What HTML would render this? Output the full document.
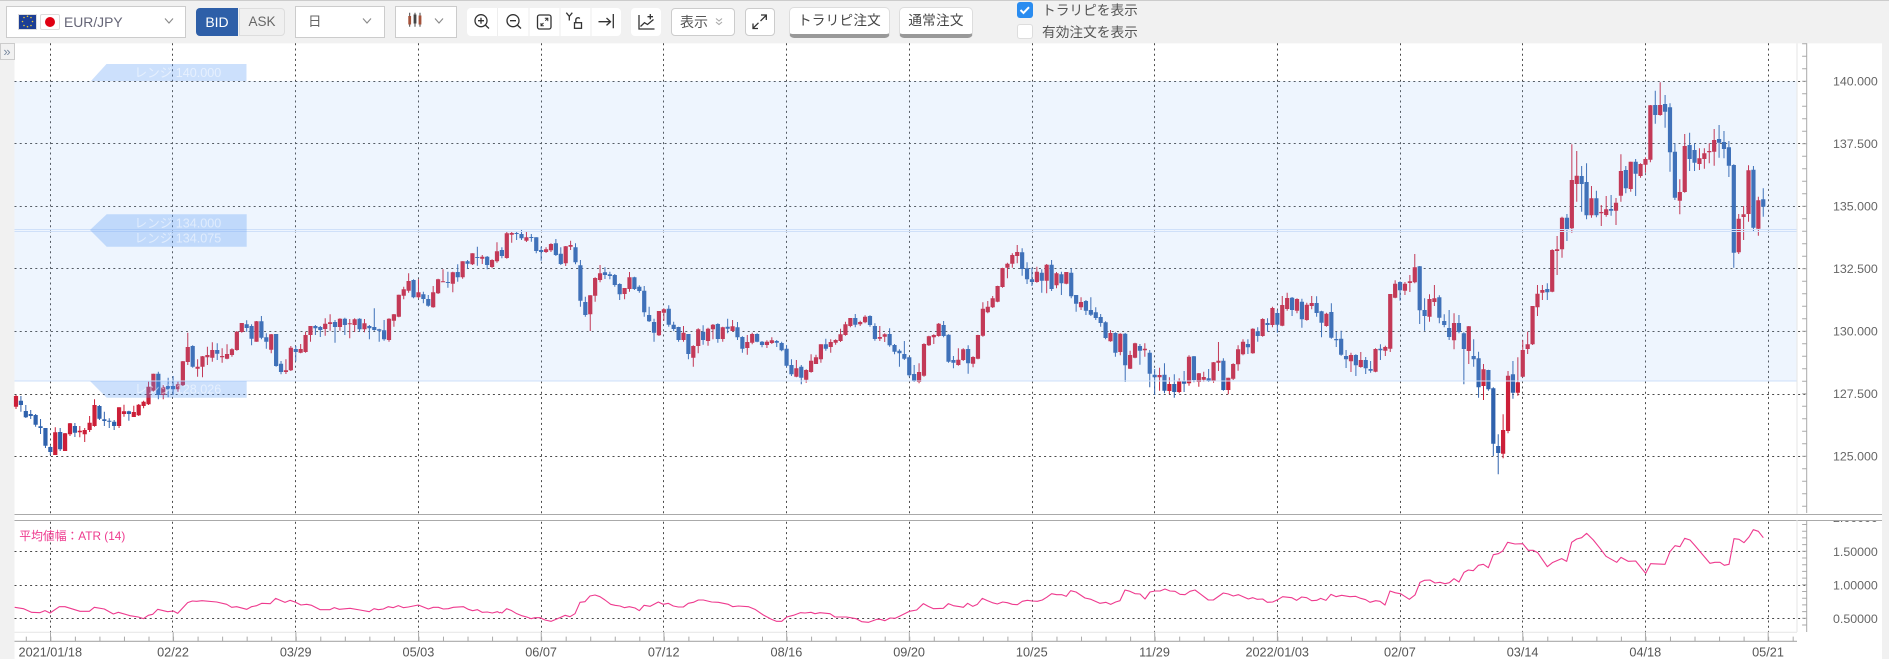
<!DOCTYPE html>
<html lang="ja"><head><meta charset="utf-8"><title>EUR/JPY</title>
<style>
html,body{margin:0;padding:0;width:1889px;height:659px;overflow:hidden;background:#f1f1f1}
body{position:relative;font-family:"Liberation Sans","Noto Sans CJK JP",sans-serif;color:#555}
.a{position:absolute;box-sizing:border-box}
.dd{background:#fff;border:1px solid #ccc;top:6px;height:32px}
.btn{background:#fff;border:1px solid #ccc;border-radius:4px;top:8px;height:28px}
.ord{top:7.300px;height:30.500px;background:#fff;border:1px solid #ddd;border-bottom:4px solid #999;border-radius:5px;font-size:13.600px;letter-spacing:.25px;color:#444;text-align:center;line-height:25px}
.cb{left:1017px;width:16px;border-radius:3px}
.lb{left:1042px;font-size:13.700px;line-height:18px;color:#555;white-space:nowrap}
svg{position:absolute;left:0;top:0}
text{font-family:"Liberation Sans","Noto Sans CJK JP",sans-serif}
</style></head><body>
<div class="a" style="left:0;top:0;width:1889px;height:1px;background:#ccc"></div>

<div class="a dd" style="left:6px;width:180px"></div>
<div class="a dd" style="left:295px;width:90px"></div>
<div class="a dd" style="left:395px;width:62px"></div>
<div class="a" style="left:18px;top:13.700px;width:19px;height:16px;background:#1d3f96;border:1px solid #ddd"></div>
<div class="a" style="left:40px;top:13.700px;width:20px;height:16px;background:#fff;border:1px solid #ddd;border-radius:2px"></div>
<div class="a" style="left:45px;top:16.500px;width:10px;height:10px;border-radius:50%;background:#e00012"></div>
<div class="a" style="left:64px;top:12px;font-size:13.900px;line-height:20px;color:#667">EUR/JPY</div>
<div class="a" style="left:196px;top:8px;width:42px;height:28px;background:#2e5fa8;border-radius:4px 0 0 4px;color:#fff;font-size:14px;line-height:28px;text-align:center">BID</div>
<div class="a" style="left:239px;top:8px;width:46px;height:28px;background:#f0f0f0;border:1px solid #ddd;border-radius:0 4px 4px 0;color:#666;font-size:13.500px;line-height:26px;text-align:center">ASK</div>
<div class="a" style="left:308px;top:12px;font-size:13.500px;line-height:20px;color:#666">日</div>
<div class="a btn" style="left:671px;width:64px"></div>
<div class="a" style="left:680px;top:12px;font-size:14px;line-height:20px;color:#555">表示</div>
<div class="a btn" style="left:745px;width:30px"></div>
<div class="a" style="left:467px;top:8px;width:154px;height:28px;background:#fff;border-radius:4px"></div>
<div class="a" style="left:631px;top:8px;width:30px;height:28px;background:#fff;border-radius:4px"></div>
<div class="a ord" style="left:789px;width:101px">トラリピ注文</div>
<div class="a ord" style="left:899px;width:74px">通常注文</div>
<div class="a cb" style="top:2.300px;height:15.500px;background:#2a8cf0"></div>
<div class="a cb" style="top:23.700px;height:15px;background:#fff;border:1px solid #ddd"></div>
<div class="a lb" style="top:1.500px">トラリピを表示</div>
<div class="a lb" style="top:23.500px">有効注文を表示</div>

<svg width="1889" height="659" viewBox="0 0 1889 659">
<!-- toolbar icons -->
<g fill="none" stroke="#8a8a8a" stroke-width="1.100">
<path d="M165 18.500l4 4.500 4-4.500M363 18.500l4 4.500 4-4.500M435 18.500l4 4.500 4-4.500"/>
<path d="M716 18.500l3 2.500 3-2.500M716 22l3 2.500 3-2.500" stroke="#aaa"/>
</g>
<path d="M409.700 12.700v14M415 12.700v14M420 12.700v14" stroke="#444" stroke-width="1" fill="none"/>
<rect x="408.300" y="16" width="2.800" height="8.500" fill="#a5523a"/><rect x="413.600" y="14.500" width="2.800" height="9" fill="#444"/><rect x="418.600" y="15.500" width="2.800" height="9" fill="#a5523a"/>
<g stroke="#eee" stroke-width="1"><path d="M497.500 8v28M529 8v28M560 8v28M591 8v28"/></g>
<g fill="none" stroke="#333" stroke-width="1.300">
<circle cx="481" cy="20.700" r="6"/><path d="M485.300 25l3.700 3.500M478 20.700h6M481 17.700v6"/>
<circle cx="513" cy="20.700" r="6"/><path d="M517.300 25l3.700 3.500M510 20.700h6"/>
<rect x="537.500" y="15" width="13.500" height="14" rx="2"/><path d="M541 25.500l2.500-2.500M541 23v2.800h2.800M547.500 18.500l-2.200 2.200M544.800 18.300h3v2.800" stroke-width="1"/>
<path d="M566.300 12.700l3 3.700 3-3.700M569.300 16.400V20.500"/><rect x="574.500" y="22.700" width="7" height="5.600"/><path d="M575.800 22.700v-2.700a2.300 2.300 0 0 1 4-1.500"/>
<path d="M598.500 21.700h12M606.500 18l4 3.700-4 3.700M613.300 14v14.300"/>
<path d="M639 15v14h15.500M640.500 26.500l4-3.800 3 1.800 6-5M647.500 16.700h5.500M650.300 14v5.400"/>
<path d="M753 28.300l5.500-5.500M753 23.500v5h5M766 15.500l-5.500 5.500M761 15h5.300v5"/>
</g>
<path d="M1020.500 10l3 3 5.500-5.800" fill="none" stroke="#fff" stroke-width="2"/>
<g fill="#e9c93a"><circle cx="27.500" cy="16.300" r=".8"/><circle cx="31" cy="17.500" r=".8"/><circle cx="32.500" cy="21.500" r=".8"/><circle cx="31" cy="25.500" r=".8"/><circle cx="27.500" cy="26.700" r=".8"/><circle cx="24" cy="25.500" r=".8"/><circle cx="22.500" cy="21.500" r=".8"/><circle cx="24" cy="17.500" r=".8"/></g>

<!-- chart surface -->
<rect x="14.500" y="43.300" width="1867.500" height="616" fill="#fff"/>
<rect x="0.500" y="43.500" width="14" height="16" fill="#f1f1f1" stroke="#ccc"/>
<text x="7" y="56" font-size="13" fill="#7a8aa0" text-anchor="middle">»</text>

<!-- grid -->
<g stroke="#4a4a4a" stroke-width="1" stroke-dasharray="2 3.200" fill="none">
<path d="M14.500 81.500H1806M14.500 143.500H1806M14.500 206.500H1806M14.500 268.500H1806M14.500 331.500H1806M14.500 394.500H1806M14.500 456.500H1806"/>
<path d="M14.500 551.500H1806M14.500 585.500H1806M14.500 618.500H1806"/>
<path d="M50.500 43.300V632M172.500 43.300V632M295.500 43.300V632M418.500 43.300V632M541.500 43.300V632M663.500 43.300V632M786.500 43.300V632M909.500 43.300V632M1032.500 43.300V632M1154.500 43.300V632M1277.500 43.300V632M1400.500 43.300V632M1522.500 43.300V632M1645.500 43.300V632M1768.500 43.300V632"/>
</g>

<!-- candles -->
<path id="rw" stroke="#cc1f38" stroke-width="1" fill="none"/>
<path id="bw" stroke="#2f62ad" stroke-width="1" fill="none"/>
<path id="rb" fill="#cc1f38"/>
<path id="bb" fill="#2f62ad"/>

<!-- range band + labels -->
<rect x="14.500" y="81" width="1782.500" height="300" fill="rgb(150,195,250)" fill-opacity=".16"/>
<path d="M14.500 229.500H1797M14.500 231.500H1797M14.500 381H1797" stroke="#cfe0f9" stroke-width="1" fill="none"/>
<path d="M91 81L106.500 64H246.500V81Z" fill="rgb(100,160,245)" fill-opacity=".33"/>
<path d="M90 230L106.700 214.300H246.700V246.700H106.700Z" fill="rgb(100,160,245)" fill-opacity=".33"/>
<path d="M90 381H246.700V397.700H106.700Z" fill="rgb(100,160,245)" fill-opacity=".33"/>
<g font-size="12.600" fill="#fff" fill-opacity=".5">
<text x="134.500" y="77">レンジ 140.000</text>
<text x="134.500" y="227.500">レンジ 134.000</text>
<text x="134.500" y="242.500">レンジ 134.075</text>
<text x="134.500" y="393.500">レンジ 128.026</text>
</g>

<!-- ATR line -->
<g fill="none" stroke="#ee3a8e" stroke-width="1.100" stroke-linejoin="round">
<polyline vector-effect="non-scaling-stroke" transform="translate(0 510) scale(.33333)" points="44,292 70,296 95,307 120,308 135,302 150,309 178,290 195,290 240,304 268,304 283,292 313,297 340,312 355,307 390,317 415,321 430,326 445,316 458,313 473,298 503,305 520,303 533,310 563,278 577,273 590,274 606,272 650,276 680,283 695,292 710,290 740,298 755,290 770,287 785,280 811,281 827,265 855,277 870,271 885,276 903,285 920,283 935,286 960,299 990,299 1003,293 1018,298 1050,295 1080,300 1108,305 1122,296 1135,299 1150,297 1165,290 1180,293 1195,287 1210,293 1225,291 1255,285 1270,291 1285,297 1300,292 1315,292 1330,297 1345,296 1360,292 1390,290 1405,298 1418,302 1432,299 1447,307 1462,306 1477,309 1492,305 1500,309"/>
<polyline vector-effect="non-scaling-stroke" transform="translate(480 570) scale(.33333)" points="60,127 66,129 80,116 95,122 110,131 125,137 140,141 153,146 165,143 180,143 195,150 213,154 240,143 255,136 270,140 285,131 300,97 315,95 330,78 345,75 360,80 375,90 392,103 405,106 420,108 433,113 448,110 465,114 478,122 492,106 510,109 535,96 550,103 565,100 580,108 595,111 610,111 625,100 640,97 655,90 670,90 695,96 715,97 745,103 758,110 775,108 805,110 825,118 850,135 875,148 890,154 905,154 920,141 940,136 962,128 975,129 993,127 1005,131 1020,128 1050,131 1065,141 1100,141 1128,146 1145,155 1165,157 1190,148 1200,148 1215,152 1230,144 1245,145 1260,138 1288,124 1310,120 1330,101 1345,109 1360,116 1390,115 1405,101 1420,107 1440,110"/>
<polyline vector-effect="non-scaling-stroke" transform="translate(950 570) scale(.33333)" points="30,110 40,112 53,100 68,109 82,103 97,85 112,92 127,98 142,102 158,96 172,98 187,103 202,104 217,94 232,91 247,93 262,94 277,90 290,82 305,71 320,74 335,74 349,79 362,62 378,66 405,84 423,88 450,100 468,97 482,103 497,96 510,92 525,60 540,64 555,71 570,72 585,87 600,66 615,63 630,63 645,57 660,63 675,64 690,73 705,74 720,64 735,60 750,71 775,90 790,90 820,69 835,72 850,78 865,74 895,87 908,83 922,88 938,87 952,97 968,96 985,88 998,80 1025,83 1040,91 1055,81 1070,83 1085,92 1100,91 1112,85 1128,91 1143,73 1158,80 1175,76 1200,80 1217,79 1232,85 1247,89 1260,97 1277,92 1290,94 1305,105 1320,63 1335,68 1350,71"/>
<polyline vector-effect="non-scaling-stroke" transform="translate(1400 480) scale(.33333)" points="0,340 28,358 45,345 60,307 73,301 90,300 105,309 120,307 135,311 148,308 162,296 177,306 192,277 205,270 220,272 235,256 250,253 265,263 280,224 295,221 308,213 323,187 345,192 368,191 385,211 400,211 413,218 442,260 457,248 485,236 500,244 515,187 530,177 545,173 560,160 580,180 600,205 618,229 650,247 663,232 685,244 707,243 737,280 752,251 795,253 810,215 825,197 840,200 854,175 870,180 885,197 930,250 945,247 960,247 973,256 987,253 1002,176 1017,178 1032,188 1047,171 1060,149 1075,154 1090,173"/>
</g>

<!-- axes -->
<text x="1833" y="522" fill="#666" font-size="12.400">2.00000</text>
<rect x="1810" y="505" width="72" height="15" fill="#fff"/>
<rect x="14.500" y="514.800" width="1867.500" height="5.200" fill="#fff"/>
<path d="M14.500 514.500H1882M14.500 520.500H1882" stroke="#aaa" stroke-width="1.100"/>
<path d="M1797 43.300V514M1797 520V632" stroke="#e6e6e6" stroke-width="1"/>
<path d="M1806.700 43.300V513M1806.700 521V632" stroke="#aaa" stroke-width="1"/>
<line x1="1804.400" x2="1804.400" y1="43.300" y2="512" stroke="#aaa" stroke-width="4.600" stroke-dasharray="1 11.500"/>
<line x1="1804.400" x2="1804.400" y1="524" y2="627" stroke="#aaa" stroke-width="4.600" stroke-dasharray="1 5.700"/>
<path d="M14.500 632.300H1797" stroke="#e8e8e8" stroke-width="1.200"/>
<path d="M14.500 641.300H1797" stroke="#aaa" stroke-width="1.100"/>
<line x1="25.800" x2="1797" y1="638.800" y2="638.800" stroke="#aaa" stroke-width="4.400" stroke-dasharray="1 23.540"/>
<line x1="50" x2="1797" y1="636.700" y2="636.700" stroke="#aaa" stroke-width="9" stroke-dasharray="1 121.690"/>

<g fill="#666" font-size="12.400">
<text x="1833" y="85.500">140.000</text>
<text x="1833" y="148">137.500</text>
<text x="1833" y="210.500">135.000</text>
<text x="1833" y="273">132.500</text>
<text x="1833" y="335.500">130.000</text>
<text x="1833" y="398">127.500</text>
<text x="1833" y="460.500">125.000</text>
<text x="1833" y="556">1.50000</text>
<text x="1833" y="589.500">1.00000</text>
<text x="1833" y="623">0.50000</text>
</g>
<text x="19.300" y="540" font-size="11.800" fill="#ee3a8e">平均値幅：ATR (14)</text>
<g fill="#555" font-size="12.700" text-anchor="middle">
<text x="50.300" y="656.500">2021/01/18</text>
<text x="173" y="656.500">02/22</text>
<text x="295.700" y="656.500">03/29</text>
<text x="418.400" y="656.500">05/03</text>
<text x="541.100" y="656.500">06/07</text>
<text x="663.700" y="656.500">07/12</text>
<text x="786.400" y="656.500">08/16</text>
<text x="909.100" y="656.500">09/20</text>
<text x="1031.800" y="656.500">10/25</text>
<text x="1154.500" y="656.500">11/29</text>
<text x="1277.200" y="656.500">2022/01/03</text>
<text x="1399.900" y="656.500">02/07</text>
<text x="1522.600" y="656.500">03/14</text>
<text x="1645.300" y="656.500">04/18</text>
<text x="1768" y="656.500">05/21</text>
</g>
</svg>

<script>
var d="R396,406.7,395,409 B400.7,405,396,411.7 B411,417.3,405,418 B414,416,410,419 B415,424.7,414,426.7 B426.3,428,419,434 B428,445.7,428,448 B447,452,446,455 R432.3,455,427.3,455 B432,449.3,428,451 R433.3,451,433,451 R423.3,434.3,423,436 B426,432.7,423,437 R430.7,432.3,426,437.3 R430,434.3,428,442 R422.7,430,416,432 R405,426,399.3,426.7 B406,418.7,405,420 B419.3,421,411.7,426 B420.7,421.7,418.3,428 B421.7,426,420,430 R407.3,426,407.3,428 R411.3,414,404.7,416.7 B411.3,414,410.7,420.7 R412,417,405.7,417 R404.7,415.3,404,416 R401.7,406,400.7,408.3 R386.7,404.3,381.7,405 R373.7,390.7,373.7,391.7 B373.7,395,371.7,399.3 R387.3,395,385,399.3 B386,389.3,377.7,397.3 B386,389.3,376,395 R384.3,389.3,381.7,391.7 R361.3,385.3,361,386 R347,362,332.7,365 B346,366.7,345.3,367.7 R366.7,368.7,359.3,376.7 R356.3,366.7,356,377.3 R355,357.3,346.7,365 R350,357.7,342.3,361.7 B350,353.7,343.3,360 R356,357.3,348.3,362.7 R354,358.7,344.3,359.3 R349.3,355,348.3,356.7 R331.7,350,331,350.7 R323,332,323,332.7 B324.3,328,320.3,331.7 B326,338.7,324.3,345.3 R321.3,341.7,321,341.7 B321.3,337.7,316,339.3 B337.3,341.7,333.3,348.7 R334.3,349.7,334,353.3 B334,366,334,366.7 B363.7,372,361,374.3 R370.3,372,359.3,374 R347.7,370.3,346,371 B349,352,346,361.3 R349,352.7,344,353.3 R335,352,331.7,352.7 R326,335,326,341.7 B326,328.3,325,335 B327,330,326,337 R323.7,329,318.3,335.7 R322.3,324,314.3,330.7 B322,327,320,342.7 R318.7,327,318.3,330.7 B318.7,325,317.7,335 R323.3,324.3,319,338.3 R319.3,325,318.3,332 B318.7,329.3,318.3,331.7 R323.3,329.3,319,332.3 B326,328.3,325,339.3 B327,330,308.3,330.7 B329.3,330.7,328.7,341.7 B330.3,339.3,320,340.7 R318.7,340,318.3,341.7 R314.3,320.7,314,326.7 R294.7,316.7,294.7,317.3 R289.3,295.7,286.7,299.3 R281,290.7,273.3,292.7 B280,297.3,279.3,298.3 R292.3,297.3,279.3,298.3 B294.3,299,291.7,303.3 B299,305.7,295,306.7 R292.3,307.3,286,307.7 R279.3,293.3,278.7,294 R281.3,282,269.3,282 B282,283,271.7,287.7 R272.3,283.7,271.7,292.3 B272,277.3,264.3,281.7 R261.3,277.3,261.3,278.7 B261.3,263.7,260,268.7 R253.3,264.3,253.3,265 B257,258,246.7,265.7 R256.7,258.7,255,264 B256.7,265,256,269.3 R260,267,259.3,268.3 R251.3,261.3,242.3,262.7 B250,256,247.3,258.3 R233.3,258,232,258.7 R233,234.7,232,242.7 B233,234,232,240 B234,238.3,229.3,240 R237.3,240.7,231,242 B237,238,234,241.7 B237.3,251,237.3,253.3 B250,252,246.7,260.7 R249.3,252,247.3,253 R244,250.3,243.3,252 B243.3,255,239,256 B253.7,264,247.3,265 R246.3,263.3,246,266 R245,246.7,240.7,250 B247.3,262.3,243.3,264.3 B265.3,300.7,260,306.7 B302,315,296.7,316.7 R295.3,314.3,295.3,331 R278,295.7,277.3,301.7 R273.3,280,265,282.3 B272.3,275,267.3,279 B274.3,276,271.7,279.3 B275,285,274,286.7 B284,294.3,283.3,300 R288,294,288,299.3 R277.3,289,272,291.7 B277.3,289,276.7,290 B286.7,291,285.3,292.7 B290.7,312.3,286,316.7 B315,321.3,306.7,322 B322,332.7,318.7,341.7 R311,335.3,311,336 R309.3,312.7,308.3,320.7 B308.7,324.7,305.3,326.7 B324.7,329,321.7,331 B327,340,326.7,341.7 R332.7,340,326,341.7 B334,354,334,359.3 R346,357.7,345.3,366.7 R329.3,346,328.3,353.3 B331.7,340,325.3,344.7 R328.7,341,327.7,345.7 R324.7,329.3,324,339.3 B324,339,323.3,342.7 R327.3,339,326.7,341.7 B326.7,328.7,318.7,333.3 R326.3,331,320,331.7 B327.3,337.3,322,340 B337,348.7,336.3,352.7 R342,348,335,354.7 R334,342.7,332.7,344.3 B334,341.7,333.3,342.3 B341.7,345,341,347.3 R341.7,345,340.3,348 R340.3,343,337.3,344 B341,342.7,340,347 B343,350.3,341.7,351.3 B348.7,365.7,345,367.3 B365,374.3,359.3,376 R368.3,376.7,360,377.3 B366.7,377.7,365,384.3 R370,379.7,369.3,382.7 R360.7,372,354.3,372.7 R357.3,364,354.7,364 R344.3,359.3,344.3,362.7 B344.3,348.7,338.7,350.7 R342,347,339.3,352.7 R340,342.7,339.3,344.7 R334.3,341,328.7,342 R324.3,335,321.7,335.7 R318,326,318,327.3 B318,324.7,314,327.3 R322,324.3,320.7,326 R316.7,322.3,315.3,323.3 B316,325,315.3,326.7 B326,339,323.3,340.7 R337,338.7,326,341 R334.3,336.7,333.3,342 B334,345.3,328.3,346.7 B345,351.7,344,354.3 B350.7,353.3,349.3,366.7 B354,358.7,341,360 B357.3,375.3,356.7,376.7 B374,380.7,365,382 R372,382,363.3,383.3 R344,375.7,343.3,376.7 R336.3,345.3,335.7,346 R335,337.3,334.3,344 R323.7,336,323,336.7 B325,336,321,337.3 B334.7,361.7,334.3,362.7 B360,362.7,356,368.3 R359.7,365,348.3,365.7 R349.3,360,348.3,361 B349,363.3,345.3,373.7 R357,363.7,356.3,367.3 R335,358.7,334.7,359.3 R308.7,335.7,302.3,336.7 R306.7,312.3,301,313.3 R298.3,307.3,296,308 R286,301.7,285.7,302.3 R268,287,267.7,287.7 R263.7,267.7,262.7,278.3 R255,263.7,253.3,267.7 R252,256,245,263.3 B252.3,269,248.3,275.7 B268.3,279.3,262.3,284 B279.3,282,267.7,286 R271.7,282,266.7,282.7 B272.7,280.7,269.3,292.7 R264.7,280.7,264,293.3 B264.7,289,260,291 R273.3,285.3,272,288.3 B274.3,283.3,271.7,295 R272,283.7,272,284.3 B272.7,296.3,268.3,298.3 B295,303.7,295,311.7 R302,307.3,297.3,310 B301,310.7,300,315 B310,314.7,297.3,316 B312.3,318,307.3,320 B317,323,314,326.7 B322.3,338,321.3,339.3 R333,341.3,330,341.7 B333,352.7,332.3,356.7 R333.7,352,333.3,355.3 B333.7,365.3,333,382 R355,368.7,350.7,369 R343.3,357.7,342.7,358.3 B346,350.7,344,364.7 R348.7,350.3,343.3,356.7 B352.7,373.7,350,387.3 B374.7,377.3,369,395 R375,377.3,367.7,390.7 B374.7,390.7,363.3,393.3 R384,391,377.3,394 B384,392,374.3,397.7 R380.7,392,378.3,393.3 B380.7,383.7,371,392 R356.7,383.3,355.3,385.7 B356.3,380,356,382.3 R373.3,382,373,386.7 R377,379.7,371.7,381.7 B378.3,380.7,369,382 R362.3,381.3,362,382.7 R360.7,362.7,342,371 B360.7,390,358.3,390.7 R377.7,390,377.7,394.3 R364,378.7,363.3,380 R349.3,364.3,345.3,370.7 R341.7,354.3,339.3,355.3 B344,347.3,339.3,354 R328.7,353.3,328.3,353.7 B331.3,336,327.3,341.7 R319,336,318.3,336.7 B323,325,318.3,331.7 R308,325,306.7,327.3 B313,324.7,310,332.7 R305,325.7,296,326.3 R298,309,292.7,310.7 B297.7,310,297,316 R299,310.7,298.3,313.3 B301.7,319.3,298.7,327.7 R304.7,320,302.7,320.7 R303,306,296,309.3 B303,313,296.3,316.7 B311.3,322.7,310.7,337.3 R313.7,326,312.7,326.7 B312,337.7,303.3,338.7 B339,340.3,331.7,347 B338.7,354.7,330.7,355.7 B356,359.3,350,368 R355,361.3,352.7,372 B355,365.3,354.3,376 R360,367,352,367.7 B360,368.3,357,374 B369,370.7,361,372.7 R349,371.7,348.3,372.3 B348.7,350.3,344.3,360 R347,350.7,345.7,356 R294,348.7,294,352 R283.7,297.7,280.3,298.3 B282,290.3,281.3,300.7 R283.7,290.7,282,295 R281.3,283,275,292 R267.3,282.3,254,283.3 B266.3,310.3,266,324 B310,316,298.3,330.7 R299,316.7,294.3,321.7 R298.3,302,285,306 B297.3,317.7,295.3,323.3 B321,325,314.3,327.3 B328,337,310,340 R323,340.3,313.3,349.3 B323,332,315,333.3 B333.3,349,332.3,384.3 R326.3,351,326,364 B356,359.3,339.3,366.7 B358.3,387.3,351.7,397.7 R369.3,386,364,400 B370,389.3,369.7,390.7 B388.3,443.7,387.3,456 B446,453,434.3,474.3 R430,453.7,414.3,458.3 R375.7,431,371,433.3 B374.3,392.7,361,398.7 R382.3,392.7,357.3,395.7 R350,376.7,340,377.3 R344.3,349,331.7,354 R306,344.3,306,345 R293.7,307.3,285,316 R290,292.7,285,300 B289,292.3,283.3,300 R250,291.7,249.3,292.3 R249.3,251,236,275 R217.7,249.3,216.7,257.7 B217.7,229,214,241 R180,228.3,144.3,232.7 R175.7,184,151,201.7 B176,184,166,211.7 B182,215.3,163.3,219.3 R198.3,215.3,186,217.7 B198.3,215.3,190.7,217.3 R212,213.3,205,226 R209.3,215,196,216.7 B209,210.7,195,215.7 R202.7,210.7,198,225 R171,195.7,154.3,201.7 B170,188.3,166,193.3 R161.7,189,161.7,191.7 B161.7,173.7,159,196 R164,176,163.3,177.7 R159,164.7,157.3,172.7 R105.3,159.7,105,162.3 B105,115,90.7,123.7 R105,115,82.3,115.7 B104,111.7,95,127.7 B107.3,152.3,103.3,171.7 B151.7,197.7,143.3,200 R192,200.7,179.3,214.3 R146,192,134,192.7 B145,159,132.7,171 B150,162.7,143.3,171 R158.3,164,148.3,170 R153.3,159,148.3,168.7 R151,152.3,143.3,163.3 R140,151.7,129,165.7 B139,142.7,125,157.7 B142,149,131,158.3 B147.3,165.7,141,177 B165,252.7,164.3,267.7 R218.7,252.3,214,254 R214.3,217,206,240 R170.3,214,165.3,221.7 B169.7,227.7,166,231 R200.3,228.7,196.7,235.7 B199.3,206.7,188.3,216.7".split(" ");
var p={R:{w:"",b:""},B:{w:"",b:""}};
for(var i=0;i<d.length;i++){
 var c=d[i].charAt(0),v=d[i].slice(1).split(",").map(Number),x=16+4.908*i;
 p[c].w+="M"+x.toFixed(2)+" "+v[2]+"V"+v[3];
 p[c].b+="M"+(x-2.1).toFixed(2)+" "+v[0]+"h4.2V"+Math.max(v[1],v[0]+1)+"h-4.2z";
}
document.getElementById("rw").setAttribute("d",p.R.w);
document.getElementById("bw").setAttribute("d",p.B.w);
document.getElementById("rb").setAttribute("d",p.R.b);
document.getElementById("bb").setAttribute("d",p.B.b);
</script>
</body></html>
